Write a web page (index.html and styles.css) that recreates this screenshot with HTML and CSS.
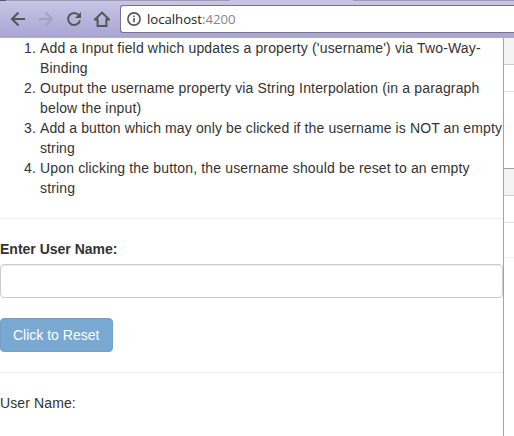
FILE: index.html
```html
<!DOCTYPE html>
<html lang="en">
<head>
<meta charset="utf-8">
<title>localhost:4200</title>
<link rel="stylesheet" href="styles.css">
</head>
<body>
<header class="browser">
  <div class="tabs"></div>
  <nav class="toolbar">
    <svg class="icon" viewBox="0 0 16 16"><path d="M15 8H2.500M8.500 1.500L2 8l6.500 6.500"/></svg>
    <svg class="icon disabled" viewBox="0 0 16 16"><path d="M1 8h12.500M7.500 1.500L14 8l-6.500 6.500"/></svg>
    <svg class="icon" viewBox="0 0 16 16"><path d="M12.800 4.200A6 6 0 1 0 13.900 9.500"/><path class="solid" d="M15 1v6H9z"/></svg>
    <svg class="icon" viewBox="0 0 16 16"><path d="M1 8.500L8 1.600l7 6.900h-2.600V15h-8.800V8.500z"/></svg>
    <div class="address">
      <svg class="info" viewBox="0 0 14 14"><circle cx="7" cy="7" r="6.100"/><path d="M7 6v4.300M7 3.500V5"/></svg>
      <span class="url">localhost<span class="port">:4200</span></span>
    </div>
  </nav>
</header>
<div class="viewport">
  <main class="page">
    <ol>
      <li>Add a Input field which updates a property ('username') via Two-Way-Binding</li>
      <li>Output the username property via String Interpolation (in a paragraph below the input)</li>
      <li class="tight">Add a button which may only be clicked if the username is NOT an empty string</li>
      <li>Upon clicking the button, the username should be reset to an empty string</li>
    </ol>
    <hr>
    <label for="username">Enter User Name:</label>
    <input id="username" type="text">
    <button disabled>Click to Reset</button>
    <hr>
    <p>User Name:</p>
  </main>
  <aside class="devtools">
    <div class="bar"></div>
    <div class="row"></div>
    <div class="pane"></div>
    <div class="bar lower"></div>
    <div class="row"></div>
    <div class="console"></div>
  </aside>
</div>
</body>
</html>
```
FILE: styles.css
```css
* { box-sizing: border-box; }
body {
  margin: 0;
  height: 436px;
  overflow: hidden;
  background: #fff;
  color: #333;
  font: 14px/20px "Liberation Sans", Arial, sans-serif;
}
.browser {
  height: 38px;
  border-bottom: 1px solid #b0b0b0;
}
.tabs {
  height: 1px;
  background: linear-gradient(to right, #5d508f 6px, #9e9bb5 6px 230px, #c9c5e5 230px 353px, #9e9bb5 353px);
}
.toolbar {
  display: flex;
  align-items: center;
  gap: 12px;
  height: 36px;
  padding-left: 10px;
  background: linear-gradient(#c8c5e5, #aaa5d4);
}
.icon {
  flex: none;
  width: 16px;
  height: 16px;
  fill: none;
  stroke: #555;
  stroke-width: 2;
}
.icon.disabled { stroke: #a5a1c5; }
.icon .solid { fill: #555; stroke: none; }
.address {
  display: flex;
  align-items: center;
  flex: 1;
  gap: 6px;
  height: 28px;
  margin-left: -2px;
  padding-left: 6px;
  border: 1px solid #77718f;
  border-right: 0;
  border-radius: 3px 0 0 3px;
  background: #fff;
}
.info {
  width: 14px;
  height: 14px;
  fill: none;
  stroke: #555;
  stroke-width: 1.600;
}
.url {
  color: #222;
  font: 13.200px/18px "Open Sans", "Noto Sans", sans-serif;
  letter-spacing: -.03px;
}
.port { color: #858585; }
.viewport {
  display: flex;
  height: 398px;
}
.page { width: 503px; }
ol {
  margin: 0;
  padding-left: 40px;
  letter-spacing: .155px;
}
.tight { letter-spacing: .112px; }
hr {
  height: 1px;
  margin: 20px 0;
  border: 0;
  background: #eee;
}
label {
  display: block;
  margin-bottom: 5px;
  font-weight: bold;
}
input {
  display: block;
  width: 100%;
  height: 34px;
  margin-bottom: 20px;
  padding: 6px 12px;
  border: 1px solid #ccc;
  border-radius: 4px;
  box-shadow: inset 0 1px 1px rgba(0, 0, 0, .075);
}
button {
  display: block;
  width: 113px;
  height: 34px;
  padding: 6px 12px;
  border: 1px solid #2e6da4;
  border-radius: 4px;
  background: #337ab7;
  color: #fff;
  font: inherit;
  text-align: left;
  white-space: nowrap;
  opacity: .65;
}
p {
  margin: 0;
  letter-spacing: .12px;
}
.devtools {
  flex: 1;
  border-left: 1px solid #a3a3a3;
}
.bar {
  height: 27px;
  border-bottom: 1px solid #ccc;
  background: #f3f3f3;
}
.bar.lower {
  height: 28px;
  border-top: 1px solid #a3a3a3;
}
.row {
  height: 27px;
  border-bottom: 1px solid #ddd;
}
.pane { height: 76px; }
.console {
  height: 35px;
  border-bottom: 1px solid #f0f0f0;
}
```
